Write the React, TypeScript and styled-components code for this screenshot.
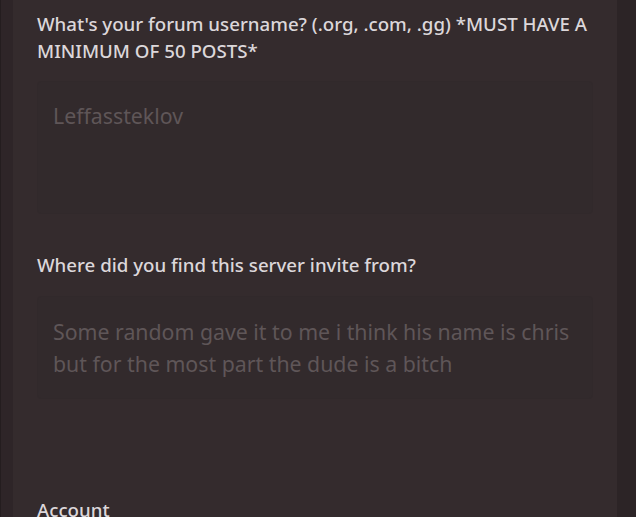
import React from "react";
import styled, { createGlobalStyle } from "styled-components";

const Global = createGlobalStyle`
  html, body { margin: 0; padding: 0; background: #2c2426; }
  body { font-family: "Noto Sans", "Open Sans", sans-serif; }
`;

const Page = styled.div`
  display: flex;
  width: 636px;
  height: 517px;
  overflow: hidden;
  background: #2c2426;
`;

const LeftRail = styled.div`
  width: 13px;
  flex: none;
  background: #2e2528;
  border-left: 1px solid #241d1f;
  box-sizing: border-box;
`;

const Panel = styled.div`
  flex: 1;
  background: #342b2d;
  padding: 10px 24px 0 24px;
  display: flex;
  flex-direction: column;
`;

const RightRail = styled.div`
  width: 19px;
  flex: none;
  background: #2c2426;
`;

const Question = styled.div<{ $gap: number }>`
  margin-bottom: ${(p) => p.$gap}px;
`;

const Label = styled.div<{ $gap?: number }>`
  color: #dcd7da;
  font-size: 18.7px;
  line-height: 27px;
  font-weight: 500;
  margin-bottom: ${(p) => p.$gap ?? 0}px;
  white-space: nowrap;
`;

const Field = styled.div<{ $h: number; $pt: number }>`
  height: ${(p) => p.$h}px;
  box-sizing: border-box;
  background: #322a2c;
  border: 1px solid #31292b;
  border-radius: 4px;
  padding: ${(p) => p.$pt}px 16px 0 15px;
  color: #5f5658;
  font-size: 21.3px;
  line-height: 32px;
`;

export default function App() {
  return (
    <>
      <Global />
      <Page>
        <LeftRail />
        <Panel>
          <Question $gap={37}>
            <Label $gap={17}>
              What's your forum username? (.org, .com, .gg) *MUST HAVE A
              <br />
              MINIMUM OF 50 POSTS*
            </Label>
            <Field $h={133} $pt={18}>Leffassteklov</Field>
          </Question>
          <Question $gap={97}>
            <Label $gap={18}>Where did you find this server invite from?</Label>
            <Field $h={103} $pt={19}>
              Some random gave it to me i think his name is chris
              <br />
              but for the most part the dude is a bitch
            </Field>
          </Question>
          <Label>Account</Label>
        </Panel>
        <RightRail />
      </Page>
    </>
  );
}
